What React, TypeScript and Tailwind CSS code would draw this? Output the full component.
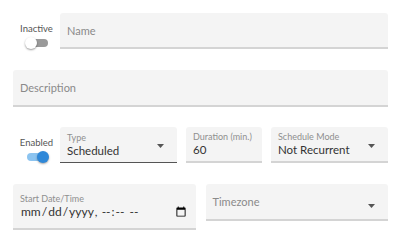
import React from 'react';

const FONT = "font-['Lato','Noto_Sans',sans-serif]";

function Toggle({ label, on }: { label: string; on?: boolean }) {
  return (
    <div className="flex w-[47px] shrink-0 flex-col items-center justify-center pt-[10px]">
      <span className="text-[9.5px] leading-[11px] text-[#555]">{label}</span>
      <span className="relative mt-[3px] block h-[12px] w-[24px]">
        <span
          className={
            on
              ? 'absolute left-[2px] top-[2px] h-[8px] w-[21px] rounded-full bg-[#8cc4f0]'
              : 'absolute left-[2px] top-[2px] h-[8px] w-[21px] rounded-full bg-[#9a9a9a]'
          }
        />
        <span
          className={
            on
              ? 'absolute left-[12px] top-0 h-[12px] w-[12px] rounded-full bg-[#2f88d8] shadow-[0_1px_2px_rgba(0,0,0,0.35)]'
              : 'absolute left-0 top-0 h-[12px] w-[12px] rounded-full bg-white shadow-[0_1px_2px_rgba(0,0,0,0.4)]'
          }
        />
      </span>
    </div>
  );
}

function Caret() {
  return (
    <svg width="7" height="4" viewBox="0 0 7 4" className="shrink-0">
      <path d="M0 0h7L3.5 4z" fill="#555" />
    </svg>
  );
}

function Field({
  label,
  value,
  placeholder,
  select,
  focused,
  className = '',
}: {
  label?: string;
  value?: string;
  placeholder?: string;
  select?: boolean;
  focused?: boolean;
  className?: string;
}) {
  return (
    <div
      className={`flex items-center rounded-t-[3px] bg-[#f4f4f4] px-[7px] ${
        focused ? 'border-b border-[#555]' : 'border-b-2 border-[#d4d4d4]'
      } ${className}`}
    >
      <div className="flex min-w-0 flex-1 flex-col">
        {label && <span className="text-[9px] leading-[11px] text-[#8f8f8f]">{label}</span>}
        {value ? (
          <span className="text-[11.5px] leading-[15px] text-[#333]">{value}</span>
        ) : (
          <span className="text-[11px] leading-[15px] text-[#8a8a8a]">{placeholder}</span>
        )}
      </div>
      {select && (
        <span className={label ? 'pr-[6px] pt-[3px]' : 'pr-[6px] pt-[8px]'}>
          <Caret />
        </span>
      )}
    </div>
  );
}

export default function App() {
  return (
    <div className={`${FONT} h-[245px] w-[400px] bg-white pl-[13px] pr-[12px] pt-[13px]`}>
      <div className="flex h-[36px]">
        <Toggle label="Inactive" />
        <Field placeholder="Name" className="flex-1" />
      </div>

      <div className="mt-[21px] flex h-[37px]">
        <Field placeholder="Description" className="flex-1" />
      </div>

      <div className="mt-[20px] flex h-[36px]">
        <Toggle label="Enabled" on />
        <Field label="Type" value="Scheduled" select focused className="w-[117px]" />
        <Field label="Duration (min.)" value="60" className="ml-[9px] w-[76px]" />
        <Field label="Schedule Mode" value="Not Recurrent" select className="ml-[9px] flex-1" />
      </div>

      <div className="mt-[21px] grid grid-cols-2 items-start gap-[10px]">
        <div className="flex h-[46px] flex-col justify-center rounded-t-[3px] border-b-2 border-[#d4d4d4] bg-[#f4f4f4] px-[7px]">
          <span className="text-[9px] leading-[11px] text-[#8f8f8f]">Start Date/Time</span>
          <input
            type="datetime-local"
            className={`${FONT} w-full bg-transparent p-0 text-[12px] leading-[15px] text-[#333] outline-none`}
          />
        </div>
        <Field placeholder="Timezone" select className="h-[37px]" />
      </div>
    </div>
  );
}
